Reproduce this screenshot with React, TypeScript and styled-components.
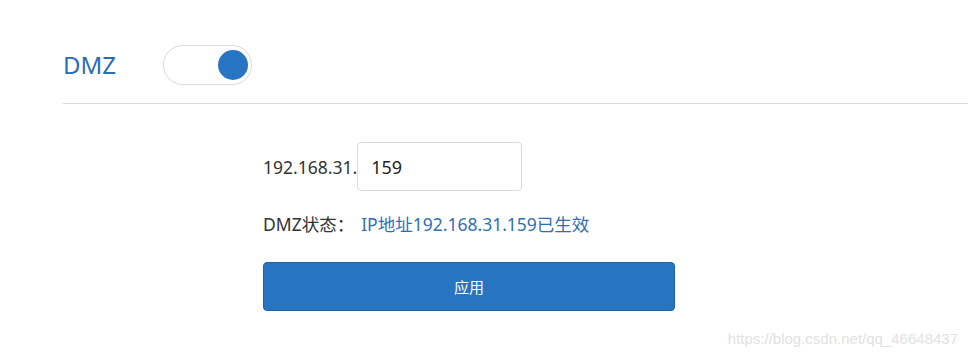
import styled, { createGlobalStyle } from 'styled-components'

const GlobalStyle = createGlobalStyle`
  html,
  body {
    margin: 0;
    padding: 0;
    background: #fff;
    font-family: 'Noto Sans', 'Noto Sans CJK SC', sans-serif;
    color: #333;
  }

  * {
    box-sizing: border-box;
  }
`

const Page = styled.div`
  position: relative;
  width: 968px;
  height: 353px;
  overflow: hidden;
  padding-left: 63px;
`

const Header = styled.div`
  align-items: center;
  border-bottom: 1px solid #dcdcdc;
  display: flex;
  padding: 45px 0 18px;
`

const Title = styled.h2`
  color: #2a6db4;
  font-size: 24px;
  font-weight: 400;
  line-height: 40px;
  margin: 0;
  width: 100px;
`

const Switch = styled.button<{ $on: boolean }>`
  background: #fff;
  border: 1px solid #dedede;
  border-radius: 20px;
  box-shadow: 0 0 1px rgba(0, 0, 0, 0.08);
  cursor: pointer;
  display: flex;
  height: 40px;
  justify-content: ${(p) => (p.$on ? 'flex-end' : 'flex-start')};
  padding: 4px 3px;
  width: 89px;
`

const Knob = styled.span`
  background: #2775c3;
  border-radius: 50%;
  display: block;
  height: 30px;
  width: 30px;
`

const Form = styled.div`
  display: flex;
  flex-direction: column;
  padding: 38px 0 0 200px;
`

const Row = styled.div`
  align-items: center;
  display: flex;
`

const Label = styled.span`
  font-size: 17.5px;
  line-height: 24px;
`

const Input = styled.input`
  border: 1px solid #dcdcdc;
  border-radius: 4px;
  color: #222;
  font-family: 'Noto Sans', 'Noto Sans CJK SC', sans-serif;
  font-size: 18px;
  height: 49px;
  outline: none;
  padding: 0 13px;
  width: 165px;
`

const Status = styled(Row)`
  margin: 21px 0 26px;
`

const StatusValue = styled.span`
  color: #2f6fb6;
  font-size: 17.5px;
  line-height: 24px;
  margin-left: 7px;
`

const ApplyButton = styled.button`
  background: #2674c2;
  border: 1px solid #1f62a6;
  border-radius: 4px;
  color: #fff;
  cursor: pointer;
  font-family: 'Noto Sans', 'Noto Sans CJK SC', sans-serif;
  font-size: 15px;
  height: 49px;
  width: 412px;
`

const Watermark = styled.span`
  bottom: 6px;
  color: #e2e2e2;
  font-family: 'Liberation Sans', Arial, sans-serif;
  font-size: 15px;
  position: absolute;
  right: 10px;
`

export const App = (): JSX.Element => {
  return (
    <Page>
      <GlobalStyle />
      <Header>
        <Title>DMZ</Title>
        <Switch $on={true} aria-label="DMZ">
          <Knob />
        </Switch>
      </Header>

      <Form>
        <Row>
          <Label>192.168.31.</Label>
          <Input defaultValue="159" />
        </Row>
        <Status>
          <Label>DMZ状态：</Label>
          <StatusValue>IP地址192.168.31.159已生效</StatusValue>
        </Status>
        <div>
          <ApplyButton>应用</ApplyButton>
        </div>
      </Form>

      <Watermark>https://blog.csdn.net/qq_46648437</Watermark>
    </Page>
  )
}

export default App
